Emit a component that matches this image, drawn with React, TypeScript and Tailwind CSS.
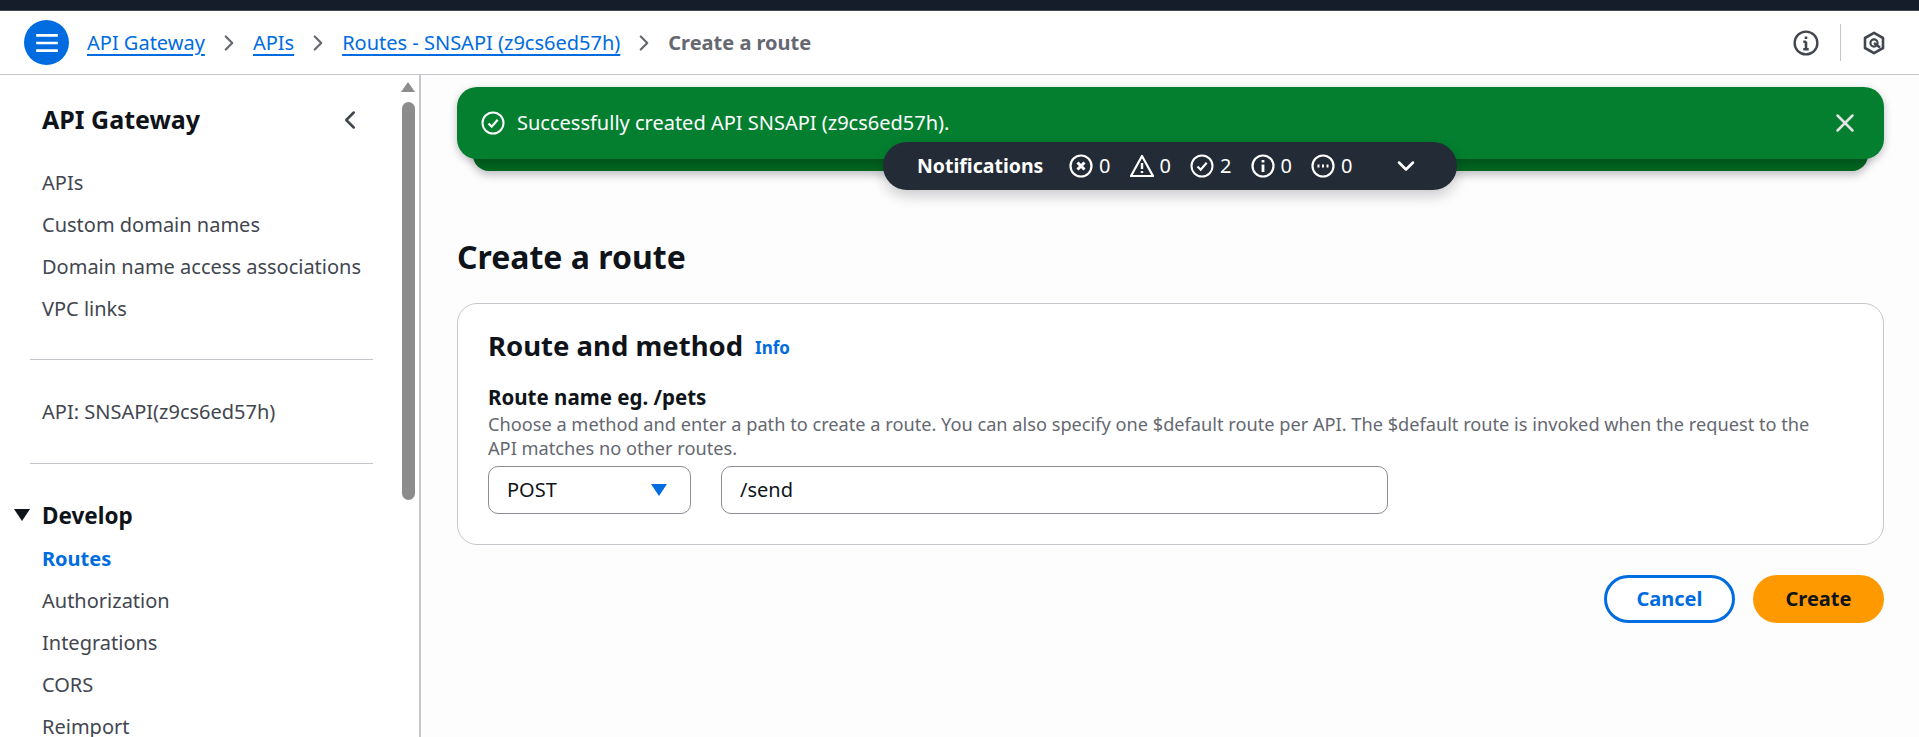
import { ChevronDown, ChevronLeft, ChevronRight, X } from 'lucide-react'

const topLinks = ['APIs', 'Custom domain names', 'Domain name access associations', 'VPC links']
const developLinks = ['Authorization', 'Integrations', 'CORS', 'Reimport']

function CheckCircle({ className }: { className: string }) {
  return (
    <svg viewBox="0 0 24 24" fill="none" stroke="currentColor" strokeWidth="2" className={className}>
      <circle cx="12" cy="12" r="10.5" />
      <path d="M7.5 12.5l3.2 3.2 6-7" strokeWidth="2.2" />
    </svg>
  )
}

function Counter({ value, children }: { value: number; children: React.ReactNode }) {
  return (
    <div className="flex w-[60.500px] items-center gap-[6px]">
      {children}
      <span>{value}</span>
    </div>
  )
}

function NotificationBar() {
  const icon = 'h-[24px] w-[24px] shrink-0'
  return (
    <div className="absolute left-[462px] top-[67px] flex h-[48px] w-[574px] items-center rounded-[24px] bg-[#232b37] pl-[34px] text-[20px] text-white shadow-[0_6px_14px_rgba(0,7,22,0.2)]">
      <span className="mr-[24px] w-[128px] whitespace-nowrap text-[19.5px] font-bold">Notifications</span>
      <Counter value={0}>
        <svg viewBox="0 0 24 24" fill="none" stroke="currentColor" strokeWidth="2.2" className={icon}>
          <circle cx="12" cy="12" r="10.5" />
          <path d="M8.500 8.500l7 7M15.500 8.500l-7 7" strokeWidth="3" />
        </svg>
      </Counter>
      <Counter value={0}>
        <svg viewBox="0 0 24 24" fill="none" stroke="currentColor" strokeWidth="2.2" className={icon}>
          <path d="M12 2L23 22H1z" strokeLinejoin="round" />
          <path d="M12 9v6M12 17v2" strokeWidth="2.4" />
        </svg>
      </Counter>
      <Counter value={2}>
        <CheckCircle className={icon} />
      </Counter>
      <Counter value={0}>
        <svg viewBox="0 0 24 24" fill="none" stroke="currentColor" strokeWidth="2.2" className={icon}>
          <circle cx="12" cy="12" r="10.5" />
          <path d="M12 10.500V18M12 6v2.400" strokeWidth="2.800" />
        </svg>
      </Counter>
      <Counter value={0}>
        <svg viewBox="0 0 24 24" fill="none" stroke="currentColor" strokeWidth="2.2" className={icon}>
          <circle cx="12" cy="12" r="10.5" />
          <path d="M6.500 12h2M11 12h2M15.500 12h2" strokeWidth="2.800" />
        </svg>
      </Counter>
      <ChevronDown className="ml-[20px] h-[28px] w-[28px]" strokeWidth={2.2} />
    </div>
  )
}

export default function App() {
  return (
    <div className="flex h-[737px] flex-col overflow-hidden bg-white font-['Noto_Sans',sans-serif] text-[20px] text-[#0f141a]">
      <div className="h-[11px] shrink-0 border-b border-[#424650] bg-[#161d2a]" />

      {/* Top bar */}
      <header className="flex h-[64px] shrink-0 items-center border-b border-[#c6c6cd] pl-[24px] pr-[33px]">
        <button className="flex h-[45px] w-[45px] items-center justify-center rounded-full bg-[#006ce0]">
          <svg viewBox="0 0 24 24" fill="none" stroke="white" strokeWidth="2.4" className="h-[26px] w-[26px]">
            <path d="M2 5h20M2 12h20M2 19h20" />
          </svg>
        </button>
        <nav className="ml-[18px] flex items-center">
          <a className="text-[#006ce0] underline underline-offset-[4px]">API Gateway</a>
          <ChevronRight className="mx-[11px] h-[26px] w-[26px] text-[#656871]" strokeWidth={2} />
          <a className="text-[#006ce0] underline underline-offset-[4px]">APIs</a>
          <ChevronRight className="mx-[11px] h-[26px] w-[26px] text-[#656871]" strokeWidth={2} />
          <a className="text-[#006ce0] underline underline-offset-[4px]">Routes - SNSAPI (z9cs6ed57h)</a>
          <ChevronRight className="mx-[11px] h-[26px] w-[26px] text-[#656871]" strokeWidth={2} />
          <span className="font-bold text-[#656871]">Create a route</span>
        </nav>
        <div className="ml-auto flex items-center">
          <svg viewBox="0 0 24 24" fill="none" stroke="#424650" strokeWidth="2.2" className="h-[26px] w-[26px]">
            <circle cx="12" cy="12" r="10.5" />
            <path d="M12 10.500V18M12 6v2.400M9.500 10.800H12M9.500 17.800h5" strokeWidth="2.400" />
          </svg>
          <div className="mx-[21px] h-[37px] w-px bg-[#c6c6cd]" />
          <svg viewBox="0 0 24 24" fill="none" stroke="#424650" strokeWidth="2.6" className="h-[24px] w-[24px]">
            <path d="M12 1.800L21 7v10l-9 5.200L3 17V7z" strokeLinejoin="round" />
            <circle cx="12" cy="12" r="3.600" strokeWidth="2.200" />
            <path d="M12 12l6 4.500" />
          </svg>
        </div>
      </header>

      <div className="flex min-h-0 flex-1">
        {/* Side nav */}
        <aside className="flex w-[421px] shrink-0 border-r-2 border-[#c6c6cd]">
          <div className="w-[400px] shrink-0 pl-[42px] pr-[27px]">
            <div className="mt-[28px] flex h-[34px] items-center justify-between pr-[8px]">
              <h2 className="text-[25px] font-bold">API Gateway</h2>
              <ChevronLeft className="h-[30px] w-[30px] text-[#424650]" strokeWidth={2} />
            </div>
            <ul className="mt-[34px] flex flex-col gap-[18px] text-[#424650]">
              {topLinks.map((label) => (
                <li key={label} className="h-[24px] whitespace-nowrap leading-[24px]">
                  {label}
                </li>
              ))}
            </ul>
            <div className="-ml-[12px] mt-[38px] h-px bg-[#c6c6cd]" />
            <p className="mt-[40px] h-[24px] leading-[24px] text-[#424650]">API: SNSAPI(z9cs6ed57h)</p>
            <div className="-ml-[12px] mt-[39px] h-px bg-[#c6c6cd]" />
            <div className="relative mt-[40px] h-[24px] text-[22.500px] font-bold leading-[24px]">
              <svg viewBox="0 0 16 12" className="absolute -left-[28px] top-[5px] h-[12px] w-[16px] fill-[#0f141a]">
                <path d="M0 0h16L8 12z" />
              </svg>
              Develop
            </div>
            <ul className="mt-[19px] flex flex-col gap-[18px] text-[#424650]">
              <li className="h-[24px] font-bold leading-[24px] text-[#006ce0]">Routes</li>
              {developLinks.map((label) => (
                <li key={label} className="h-[24px] leading-[24px]">
                  {label}
                </li>
              ))}
            </ul>
          </div>
          {/* Scrollbar */}
          <div className="flex w-[19px] shrink-0 flex-col items-center pr-[3px]">
            <div className="mt-[7px] h-0 w-0 border-x-[7px] border-b-[10px] border-x-transparent border-b-[#8c8c8c]" />
            <div className="mt-[10px] h-[398px] w-[13px] rounded-full bg-[#8c8c8c]" />
          </div>
        </aside>

        {/* Content */}
        <main className="relative min-w-0 flex-1 bg-[#fdfdfd] pl-[36px] pr-[35px] pt-[12px]">
          <div className="relative">
            <div className="absolute inset-x-[16px] top-[12px] h-[72px] rounded-[16px] bg-[#00651f] shadow-[0_4px_8px_rgba(0,7,22,0.25)]" />
            <div className="relative flex h-[72px] items-center rounded-[20px] bg-[#037f2f] pl-[24px] pr-[24px] text-white shadow-[0_3px_8px_rgba(0,7,22,0.25)]">
              <CheckCircle className="h-[24px] w-[24px] shrink-0" />
              <span className="ml-[12px]">Successfully created API SNSAPI (z9cs6ed57h).</span>
              <X className="ml-auto h-[30px] w-[30px] text-[#e4e4e4]" strokeWidth={2} />
            </div>
          </div>
          <NotificationBar />

          <h1 className="mt-[73px] text-[32px] font-bold leading-[50px]">Create a route</h1>

          <section className="mt-[21px] h-[242px] rounded-[20px] border border-[#c6c6cd] bg-white px-[30px] pt-[22px]">
            <div className="flex items-center">
              <h2 className="whitespace-nowrap text-[27.500px] font-bold leading-[40px]">Route and method</h2>
              <a className="ml-[12px] mt-[4px] text-[17px] font-bold text-[#006ce0]">Info</a>
            </div>
            <label className="mt-[19px] block text-[20.500px] font-bold leading-[24px]">Route name eg. /pets</label>
            <p className="mt-[3px] w-[1340px] text-[18.200px] leading-[24px] text-[#656871]">
              Choose a method and enter a path to create a route. You can also specify one $default route per API. The
              $default route is invoked when the request to the API matches no other routes.
            </p>
            <div className="mt-[6px] flex gap-[30px]">
              <div className="flex h-[48px] w-[203px] items-center justify-between rounded-[10px] border border-[#8c8c94] pl-[18px] pr-[23px]">
                <span>POST</span>
                <svg viewBox="0 0 16 12" className="h-[12px] w-[16px] fill-[#006ce0]">
                  <path d="M0 0h16L8 12z" />
                </svg>
              </div>
              <div className="flex h-[48px] w-[667px] items-center rounded-[10px] border border-[#8c8c94] px-[18px]">
                /send
              </div>
            </div>
          </section>

          <div className="mt-[30px] flex justify-end gap-[18px] font-bold">
            <button className="h-[48px] w-[131px] rounded-full border-[3px] border-[#006ce0] bg-white text-[#006ce0]">
              Cancel
            </button>
            <button className="h-[48px] w-[131px] rounded-full bg-[#ff9900] text-[#0f141a]">Create</button>
          </div>
        </main>
      </div>
    </div>
  )
}
